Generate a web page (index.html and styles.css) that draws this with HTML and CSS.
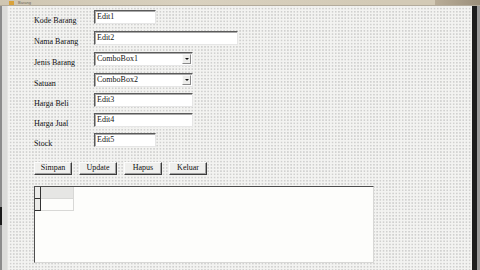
FILE: index.html
```html
<!DOCTYPE html>
<html>
<head>
<meta charset="utf-8">
<link rel="stylesheet" href="styles.css">
</head>
<body>
<div class="screen">
  <div class="titlebar">
    <span class="ticon"></span>
    <span class="ttext">Barang</span>
    <span class="tfill"></span>
    <span class="tdark"></span>
  </div>
  <div class="main">
    <div class="leftframe"><div class="lf-dark"></div><div class="lf-block"></div></div>
    <div class="form">
      <div class="row r1">
        <div class="label">Kode Barang</div>
        <div class="edit short">Edit1</div>
      </div>
      <div class="row r2">
        <div class="label">Nama Barang</div>
        <div class="edit long">Edit2</div>
      </div>
      <div class="row r3">
        <div class="label">Jenis Barang</div>
        <div class="edit combo"><span class="ctext">ComboBox1</span><span class="dd"><span class="arrow"></span></span></div>
      </div>
      <div class="row r4">
        <div class="label">Satuan</div>
        <div class="edit combo"><span class="ctext">ComboBox2</span><span class="dd"><span class="arrow"></span></span></div>
      </div>
      <div class="row r5">
        <div class="label">Harga Beli</div>
        <div class="edit mid">Edit3</div>
      </div>
      <div class="row r6">
        <div class="label">Harga Jual</div>
        <div class="edit mid">Edit4</div>
      </div>
      <div class="row r7">
        <div class="label">Stock</div>
        <div class="edit short">Edit5</div>
      </div>
      <div class="buttons">
        <div class="btn">Simpan</div>
        <div class="btn">Update</div>
        <div class="btn">Hapus</div>
        <div class="btn">Keluar</div>
      </div>
      <div class="grid">
        <div class="grow">
          <div class="fixcol"></div>
          <div class="cell head"></div>
        </div>
        <div class="grow">
          <div class="fixcol"></div>
          <div class="cell"></div>
        </div>
      </div>
    </div>
    <div class="rightframe"><div class="rf-dark"></div><div class="rf-light"></div></div>
  </div>
</div>
</body>
</html>
```
FILE: styles.css
```css
html, body {
  margin: 0;
  padding: 0;
  background: #f0f0ee;
}
.screen {
  width: 480px;
  height: 270px;
  display: flex;
  flex-direction: column;
  overflow: hidden;
  font-family: "Liberation Serif", "Times New Roman", serif;
  font-size: 8px;
  color: #111;
}
.titlebar {
  height: 5px;
  flex: none;
  display: flex;
  align-items: center;
  overflow: hidden;
  background: linear-gradient(to right, #cfc6b2, #d9d1bf 40%, #d3cab6 80%);
  border-bottom: 1px solid #b3ab9c;
}
.ticon {
  width: 5px;
  height: 4px;
  margin-left: 9px;
  margin-right: 4px;
  background: #d9a23a;
  flex: none;
}
.ttext {
  font-family: "Liberation Sans", Arial, sans-serif;
  font-size: 4px;
  line-height: 5px;
  color: #6c6657;
  flex: none;
}
.tfill { flex: 1; }
.tdark {
  width: 45px;
  height: 5px;
  background: linear-gradient(to right, #b9ad98, #9b8f7b);
  flex: none;
}
.main {
  flex: 1;
  display: flex;
}
.leftframe {
  width: 7px;
  flex: none;
  background: #dcdcda;
  position: relative;
}
.lf-dark {
  position: absolute;
  left: 0;
  top: 0;
  bottom: 0;
  width: 2px;
  background: #8c8c8c;
}
.lf-block {
  position: absolute;
  left: 0;
  top: 201px;
  width: 2px;
  height: 18px;
  background: #1a1a1a;
}
.form {
  flex: 1;
  padding: 4px 0 0 26px;
  background-color: #f3f3f1;
  background-image: radial-gradient(circle, #8e8e8e 0.4px, transparent 0.65px);
  background-size: 3.2px 3.2px;
  background-position: 1px 1px;
  border-left: 1px solid #e4e4e2;
}
.row {
  display: flex;
  align-items: flex-start;
}
.r1, .r2, .r3 { height: 21px; }
.r4, .r5, .r6 { height: 20px; }
.r7 { height: 29px; }
.label {
  width: 60px;
  flex: none;
  line-height: 8px;
  padding-top: 7px;
  white-space: nowrap;
}
.edit {
  background: #fff;
  border: 1px solid;
  border-color: #5a5a5a #e6e6e6 #e6e6e6 #5a5a5a;
  box-shadow: inset 1px 1px 0 #a8a8a8;
  padding: 2px 0 0 2px;
  line-height: 8px;
  box-sizing: border-box;
  height: 14px;
  white-space: nowrap;
}
.short { width: 62px; }
.long { width: 144px; }
.mid { width: 99px; }
.combo {
  width: 99px;
  display: flex;
  justify-content: space-between;
  align-items: flex-start;
  padding-right: 1px;
}
.dd {
  width: 9px;
  height: 10px;
  box-sizing: border-box;
  margin-top: -1px;
  background: #ededeb;
  border: 1px solid;
  border-color: #fafafa #8a8a8a #8a8a8a #fafafa;
  display: flex;
  align-items: center;
  justify-content: center;
}
.arrow {
  width: 0;
  height: 0;
  border-left: 2px solid transparent;
  border-right: 2px solid transparent;
  border-top: 2px solid #111;
}
.buttons {
  display: flex;
  gap: 7px;
}
.btn {
  width: 38px;
  height: 13px;
  box-sizing: border-box;
  background: #efefed;
  border: 1px solid;
  border-color: #fbfbfb #3c3c3c #3c3c3c #fbfbfb;
  box-shadow: inset -1px -1px 0 #a0a0a0;
  text-align: center;
  line-height: 10px;
}
.grid {
  margin-top: 11px;
  width: 340px;
  height: 77px;
  box-sizing: border-box;
  background: #fdfdfb;
  border: 1px solid;
  border-color: #4e4e4e #d8d8d6 #d8d8d6 #4e4e4e;
  display: flex;
  flex-direction: column;
}
.grow {
  display: flex;
  height: 12px;
}
.fixcol {
  width: 6px;
  height: 12px;
  box-sizing: border-box;
  background: #ebebe9;
  border-right: 1px solid #333;
  border-bottom: 1px solid #333;
}
.cell {
  width: 33px;
  height: 12px;
  box-sizing: border-box;
  border-right: 1px solid #d8d8d6;
  border-bottom: 1px solid #d8d8d6;
}
.cell.head {
  background: #e6e6e4;
}
.rightframe {
  width: 8px;
  flex: none;
  display: flex;
}
.rf-dark {
  width: 5px;
  background: #1e1e1e;
}
.rf-light {
  flex: 1;
  background: #9a9a9a;
}
```
